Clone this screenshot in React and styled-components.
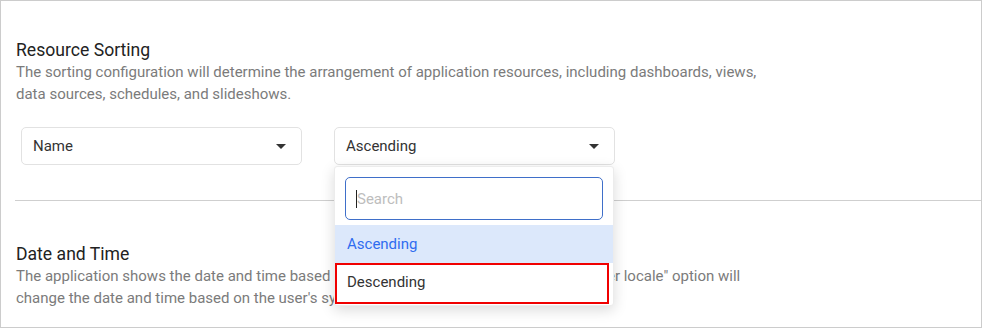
import React from "react";
import styled, { createGlobalStyle } from "styled-components";

const GlobalStyle = createGlobalStyle`
  html, body {
    margin: 0;
    padding: 0;
    background: #fff;
  }
  body {
    font-family: Roboto, "Liberation Sans", sans-serif;
  }
  * { box-sizing: border-box; }
`;

function Caret() {
  return (
    <CaretIcon viewBox="0 0 10 5" width="10" height="5">
      <path d="M0 0 L10 0 L5 5 Z" fill="#333" />
    </CaretIcon>
  );
}

function App() {
  return (
    <>
      <GlobalStyle />
      <Frame>
        <Section>
          <Title>Resource Sorting</Title>
          <Desc>
            The sorting configuration will determine the arrangement of application resources, including dashboards, views,
            data sources, schedules, and slideshows.
          </Desc>
          <SelectRow>
            <SelectWrap>
              <Select>
                <span>Name</span>
                <Caret />
              </Select>
            </SelectWrap>
            <SelectWrap>
              <Select>
                <span>Ascending</span>
                <Caret />
              </Select>
              <Menu>
                <SearchArea>
                  <SearchBox>
                    <TextCursor />
                    <SearchInput placeholder="Search" />
                  </SearchBox>
                </SearchArea>
                <Option selected>Ascending</Option>
                <Option marked>Descending</Option>
              </Menu>
            </SelectWrap>
          </SelectRow>
        </Section>
        <Divider />
        <Section>
          <Title>Date and Time</Title>
          <Desc>
            The application shows the date and time based on the device's locale. Enable the "Use user locale" option will
            change the date and time based on the user's system settings.
          </Desc>
        </Section>
      </Frame>
    </>
  );
}

const Frame = styled.div`
  width: 982px;
  height: 328px;
  border: 1px solid #cccccc;
  overflow: hidden;
`;

const Section = styled.div`
  padding: 39px 0 35px 15px;
  &:last-child {
    padding-top: 43px;
  }
`;

const Title = styled.h2`
  margin: 0;
  font-size: 17.6px;
  font-weight: 400;
  line-height: 21px;
  color: #222;
`;

const Desc = styled.p`
  margin: 0;
  max-width: 770px;
  font-size: 15px;
  line-height: 22px;
  color: #7b7b7b;
`;

const SelectRow = styled.div`
  display: flex;
  gap: 32px;
  padding: 22px 0 0 5px;
`;

const SelectWrap = styled.div`
  position: relative;
  width: 281px;
`;

const Select = styled.div`
  height: 38px;
  display: flex;
  align-items: center;
  justify-content: space-between;
  padding: 0 15px 0 11px;
  border: 1px solid #e2e2e2;
  border-radius: 5px;
  font-size: 15px;
  color: #333;
`;

const CaretIcon = styled.svg`
  display: block;
`;

const Menu = styled.div`
  position: absolute;
  top: 39px;
  left: 0;
  width: 280px;
  background: #fff;
  border: 1px solid #ececec;
  border-radius: 3px;
  box-shadow: 0 4px 14px rgba(0, 0, 0, 0.15);
  padding-bottom: 1px;
  z-index: 5;
`;

const SearchArea = styled.div`
  padding: 10px 10px 5px 10px;
`;

const SearchBox = styled.div`
  position: relative;
  height: 43px;
  border: 1px solid #3f6fc9;
  border-radius: 5px;
  display: flex;
  align-items: center;
`;

const TextCursor = styled.span`
  position: absolute;
  left: 10px;
  top: 12px;
  width: 1px;
  height: 18px;
  background: #222;
`;

const SearchInput = styled.input`
  border: none;
  outline: none;
  background: transparent;
  width: 100%;
  height: 100%;
  padding: 0 0 0 11px;
  font-family: Roboto, "Liberation Sans", sans-serif;
  font-size: 15px;
  color: #333;
  &::placeholder {
    color: #bdbdbd;
  }
`;

const Option = styled.div`
  height: ${(p) => (p.marked ? "41px" : "38px")};
  display: flex;
  align-items: center;
  font-size: 15px;
  padding-left: ${(p) => (p.marked ? "10px" : "12px")};
  padding-bottom: ${(p) => (p.marked ? "3px" : "0")};
  width: ${(p) => (p.marked ? "calc(100% - 4px)" : "100%")};
  color: ${(p) => (p.selected ? "#2f6cf0" : "#333")};
  background: ${(p) => (p.selected ? "#dce8fb" : "#fff")};
  border: ${(p) => (p.marked ? "2px solid #f00000" : "none")};
`;

const Divider = styled.hr`
  margin: 0 0 0 14px;
  border: none;
  border-top: 1px solid #cfcfcf;
`;

export default App;
